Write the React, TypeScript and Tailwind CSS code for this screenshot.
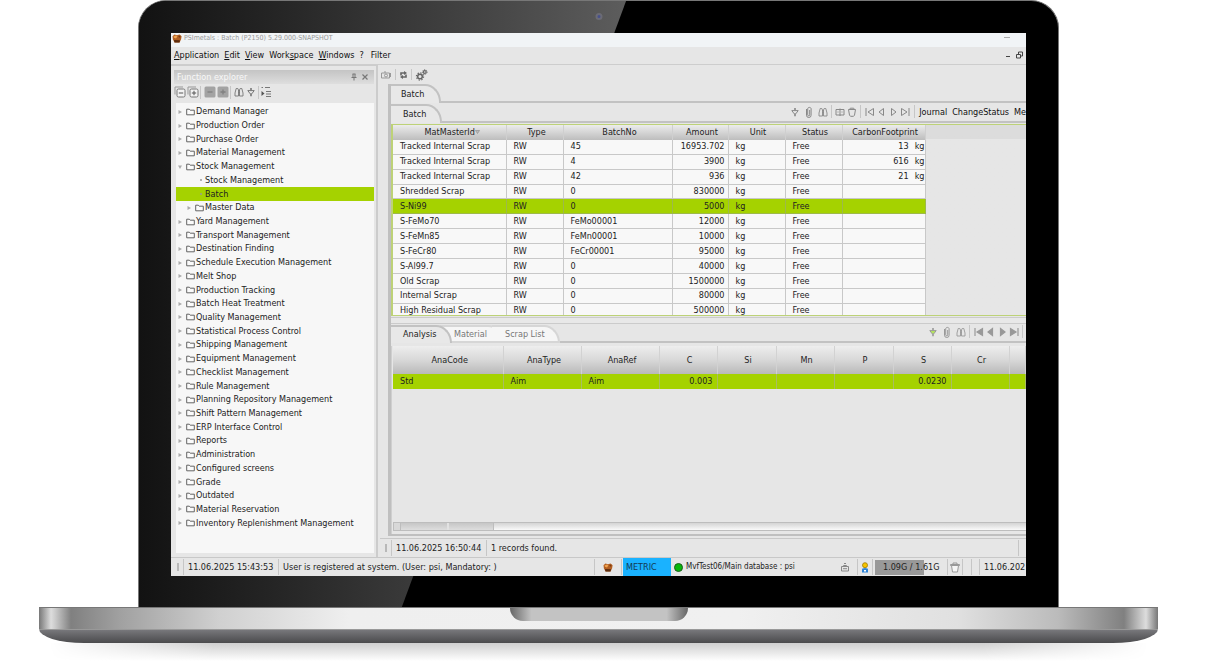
import React from "react";

type NodeState = "closed" | "open" | "leaf" | "selected" | "child";

const tree: { label: string; kind?: NodeState }[] = [
  { label: "Demand Manager" },
  { label: "Production Order" },
  { label: "Purchase Order" },
  { label: "Material Management" },
  { label: "Stock Management", kind: "open" },
  { label: "Stock Management", kind: "leaf" },
  { label: "Batch", kind: "selected" },
  { label: "Master Data", kind: "child" },
  { label: "Yard Management" },
  { label: "Transport Management" },
  { label: "Destination Finding" },
  { label: "Schedule Execution Management" },
  { label: "Melt Shop" },
  { label: "Production Tracking" },
  { label: "Batch Heat Treatment" },
  { label: "Quality Management" },
  { label: "Statistical Process Control" },
  { label: "Shipping Management" },
  { label: "Equipment Management" },
  { label: "Checklist Management" },
  { label: "Rule Management" },
  { label: "Planning Repository Management" },
  { label: "Shift Pattern Management" },
  { label: "ERP Interface Control" },
  { label: "Reports" },
  { label: "Administration" },
  { label: "Configured screens" },
  { label: "Grade" },
  { label: "Outdated" },
  { label: "Material Reservation" },
  { label: "Inventory Replenishment Management" },
];

const batches: string[][] = [
  ["Tracked Internal Scrap", "45", "16953.702", "13"],
  ["Tracked Internal Scrap", "4", "3900", "616"],
  ["Tracked Internal Scrap", "42", "936", "21"],
  ["Shredded Scrap", "0", "830000", ""],
  ["S-Ni99", "0", "5000", ""],
  ["S-FeMo70", "FeMo00001", "12000", ""],
  ["S-FeMn85", "FeMn00001", "10000", ""],
  ["S-FeCr80", "FeCr00001", "95000", ""],
  ["S-Al99.7", "0", "40000", ""],
  ["Old Scrap", "0", "1500000", ""],
  ["Internal Scrap", "0", "80000", ""],
  ["High Residual Scrap", "0", "500000", ""],
];

const batchHeads = ["MatMasterId", "Type", "BatchNo", "Amount", "Unit", "Status", "CarbonFootprint"];
const anaHeads = ["AnaCode", "AnaType", "AnaRef", "C", "Si", "Mn", "P", "S", "Cr", ""];
const anaRow = ["Std", "Aim", "Aim", "0.003", "", "", "", "0.0230", "", ""];

function Icon({ children, className = "", w = 12 }: { children: React.ReactNode; className?: string; w?: number }) {
  return (
    <svg width={w} height="12" viewBox={`0 0 ${w} 12`} fill="none" stroke="currentColor" className={`shrink-0 ${className}`} aria-hidden="true">
      {children}
    </svg>
  );
}

const Folder = () => (
  <svg width="9" height="8" viewBox="0 0 9 8" fill="#fbfbfb" stroke="#555" strokeWidth=".9" className="shrink-0" aria-hidden="true">
    <path d="M.7 6.8V1.2h2.6l.9 1h4.1v4.6z" />
  </svg>
);

const Binoculars = () => (
  <Icon w={10}>
    <path d="M1 10V7L2.2 2.5h1.6L4.5 4v6zM9 10V7L7.8 2.5H6.2L5.5 4v6zM4.5 4.5h1M4.5 6.5h1" strokeWidth=".9" />
  </Icon>
);

const Diamond = ({ lit = false }: { lit?: boolean }) => (
  <Icon w={10}>
    <path d="M1.8 4.6h6.4L5.8 7.8H4.2z" fill={lit ? "#b5e85a" : "none"} />
    <path d="M5 2v2.200M5 8v2.200" strokeWidth="1.600" />
  </Icon>
);

const Clip = () => (
  <Icon w={8}>
    <path d="M1.5 3v6.2a2.3 2.3 0 0 0 4.6 0V2.6a1.8 1.8 0 0 0-3.4 0v6.2a1 1 0 0 0 2 0V4" strokeWidth="1" />
  </Icon>
);

const Bin = () => (
  <Icon w={10}>
    <path d="M1.5 3.5h7L7.5 9.2 6.5 10.3h-3L2.5 9.2zM2.5 3.5l.8-1.3h3.4l.8 1.3" />
  </Icon>
);

const navPaths = [
  { name: "First", d: "M9.5 2.5v7L4 6zM2 2v8" },
  { name: "Previous", d: "M7.5 2.5v7L3 6z" },
  { name: "Next", d: "M3.5 2.5v7L8 6z" },
  { name: "Last", d: "M1.5 2.5v7L7 6zM9 2v8" },
];

function NavButtons({ solid = false }: { solid?: boolean }) {
  return (
    <>
      {navPaths.map((n) => (
        <button key={n.name} aria-label={n.name} className="flex w-[12px] shrink-0 justify-center">
          <Icon w={11}>
            <path d={n.d} fill={solid ? "currentColor" : "none"} strokeWidth={solid ? 1.2 : 1} />
          </Icon>
        </button>
      ))}
    </>
  );
}

const Sep = ({ className = "h-[13px]" }: { className?: string }) => <span className={`w-px shrink-0 bg-[#c6c6c6] ${className}`} />;

const Grip = () => <span className="h-[8px] w-[2px] shrink-0 bg-[#b8b8b8]" />;

const Pumpkin = () => (
  <svg width="10" height="9" viewBox="0 0 10 9" className="shrink-0" aria-hidden="true">
    <path d="M.5 2.2 2.4.6 5 1.3 7.6.4l2 1.8-.5 3L7.6 8.4H2.6L.9 5.6z" fill="#b25f22" />
    <path d="M1.500 2.400 4 1.600l1.400 1L4 4.400l-2-.6z" fill="#f2a450" />
    <path d="m2 6 6 .2L7.500 8.400h-5z" fill="#5d2c0d" />
    <path d="M6 2l2.400-.3L8 4z" fill="#7b3c12" />
  </svg>
);

function Tab({ label, active = true, className = "" }: { label: string; active?: boolean; className?: string }) {
  return (
    <button
      role="tab"
      aria-selected={active}
      className={`h-full shrink-0 rounded-tr-[16px_18px] border-t-2 border-r-2 text-left ${
        active ? "border-[#c2c2c2] bg-[#e8e8e8] pb-[2px] text-[#222]" : "border-[#d6d6d6] bg-[#f6f6f6] text-[#777]"
      } ${className}`}
    >
      {label}
    </button>
  );
}

function TreeRow({ label, kind = "closed" }: { label: string; kind?: NodeState }) {
  const leaf = kind === "leaf" || kind === "selected";
  const indent = leaf ? "pl-[21px]" : kind === "child" ? "pl-[9px]" : "pl-0";
  return (
    <li className={`flex min-h-0 ${kind === "selected" ? "bg-[#a5d200]" : ""}`}>
      <button className={`flex w-full items-center text-left ${indent}`}>
        <span className="flex w-[8px] shrink-0 justify-center">
          {leaf ? (
            <span className="size-[2px] rounded-full bg-[#999]" />
          ) : (
            <svg width="4" height="4" viewBox="0 0 4 4" fill="#aaa" aria-hidden="true">
              <path d={kind === "open" ? "M0 .5h4L2 4z" : "M.5 0v4L4 2z"} />
            </svg>
          )}
        </span>
        {!leaf && (
          <span className="mr-px ml-[2px]">
            <Folder />
          </span>
        )}
        <span className="leading-none">{label}</span>
      </button>
    </li>
  );
}

function FunctionExplorer() {
  return (
    <aside className="flex w-[207px] shrink-0 flex-col border-t border-r-2 border-[#cccccc] pt-[4px] pr-[2px] pl-[3px]">
      <header className="flex h-[14px] items-center bg-linear-to-b from-[#c4c4c4] to-[#dedede] pr-[4px] pl-[3px]">
        <h2 className="flex-1 text-[9px] text-[#f8f8f8]">Function explorer</h2>
        <button aria-label="Pin" className="text-[#777]">
          <Icon w={12}>
            <path d="M4.500 3h3M5 3v3M7 3v3M3.500 6.500h5M6 6.500v3" />
          </Icon>
        </button>
        <button aria-label="Close" className="text-[#777]">
          <Icon w={10}>
            <path d="m2.500 3.500 5 5m0-5-5 5" strokeWidth="1.200" />
          </Icon>
        </button>
      </header>
      <div className="flex h-[16px] items-center gap-px text-[#777]">
        <button aria-label="Collapse all">
          <Icon w={12}>
            <path d="M1 8.500V1h8" stroke="#999" />
            <rect x="3" y="3" width="8" height="8" rx="1.500" fill="#f2f2f2" />
            <path d="M4.800 7h4.400" stroke="#555" />
          </Icon>
        </button>
        <button aria-label="Expand all">
          <Icon w={12}>
            <path d="M1 8.500V1h8" stroke="#999" />
            <rect x="3" y="3" width="8" height="8" rx="1.500" fill="#f2f2f2" />
            <path d="M4.800 7h4.400M7 4.800v4.400" stroke="#555" />
          </Icon>
        </button>
        <Sep />
        <button aria-label="Collapse" className="ml-[2px]">
          <Icon w={12}>
            <rect x=".5" y=".5" width="11" height="11" rx="1.500" fill="#a3a3a3" stroke="none" />
            <path d="M3.500 6h5" stroke="#808080" strokeWidth="1.300" />
          </Icon>
        </button>
        <button aria-label="Expand">
          <Icon w={12}>
            <rect x=".5" y=".5" width="11" height="11" rx="1.500" fill="#a3a3a3" stroke="none" />
            <path d="M3.500 6h5M6 3.500v5" stroke="#808080" strokeWidth="1.300" />
          </Icon>
        </button>
        <Sep />
        <button aria-label="Find" className="ml-[2px]"><Binoculars /></button>
        <button aria-label="Filter" className="ml-px"><Diamond /></button>
        <Sep className="ml-px h-[13px]" />
        <button aria-label="Tree options">
          <Icon w={12}>
            <path d="M1.500 1.500H3M5 1.500h5M6 5.500h5M6 8h5M6 10.500h5" />
            <path d="M1.500 5v5L4.500 7.500z" fill="#555" stroke="none" />
          </Icon>
        </button>
      </div>
      <div className="mt-[3px] mb-[4px] ml-[2px] flex-1 bg-[#f7f7f7] pt-[2px] pb-[23px]">
        <ul className="grid h-[425px] auto-rows-fr">
          {tree.map((n, i) => (
            <TreeRow key={i} {...n} />
          ))}
        </ul>
      </div>
    </aside>
  );
}

function BatchTable() {
  return (
    <div className="h-[192px] overflow-hidden border-y border-l-2 border-[#bdd277] bg-linear-to-b from-[#dcdcdc] from-[14px] to-[#e6e6e6] to-[14px]">
      <table className="h-[194px] table-fixed border-collapse">
        <colgroup>
          <col className="w-[113px]" />
          <col className="w-[57px]" />
          <col className="w-[109px]" />
          <col className="w-[56px]" />
          <col className="w-[57px]" />
          <col className="w-[57px]" />
          <col className="w-[83px]" />
        </colgroup>
        <thead>
          <tr className="bg-linear-to-b from-[#ececec] to-[#bdbdbd]">
            {batchHeads.map((h, i) => (
              <th key={h} className="h-[15px] border-r border-[#cfcfcf] p-0 text-center font-normal leading-none">
                <span className={i === 0 ? "pl-[6px]" : i < 4 ? "pl-[4px]" : "pl-[3px]"}>{h}</span>
                {i === 0 && (
                  <svg width="5" height="4" viewBox="0 0 5 4" fill="#bbb" stroke="#888" strokeWidth=".6" className="mb-[2px] inline" aria-hidden="true">
                    <path d="M.5.5h4l-2 3z" />
                  </svg>
                )}
              </th>
            ))}
          </tr>
        </thead>
        <tbody>
          {batches.map((r, i) => {
            const sel = i === 4;
            const cell = `border-r border-b p-0 leading-none whitespace-nowrap ${sel ? "border-[#9db94a]" : "border-[#c8c8c8]"}`;
            return (
              <tr key={i} aria-selected={sel} className={sel ? "bg-[#a5d200]" : "bg-[#f8f8f8]"}>
                <td className={`${cell} pl-[7px]`}>{r[0]}</td>
                <td className={`${cell} pl-[7px]`}>RW</td>
                <td className={`${cell} pl-[7px]`}>{r[1]}</td>
                <td className={`${cell} pr-[3px] text-right`}>{r[2]}</td>
                <td className={`${cell} pl-[7px]`}>kg</td>
                <td className={`${cell} pl-[7px]`}>Free</td>
                <td className={cell}>
                  {r[3] && (
                    <span className="flex justify-end gap-[6px]">
                      <span>{r[3]}</span>
                      <span>kg</span>
                    </span>
                  )}
                </td>
              </tr>
            );
          })}
        </tbody>
      </table>
    </div>
  );
}

function AnalysisTable() {
  return (
    <table className="w-full table-fixed border-collapse">
      <colgroup>
        <col className="w-[110px]" />
        <col className="w-[78px]" />
        <col className="w-[78px]" />
        <col className="w-[58px]" />
        <col className="w-[59px]" />
        <col className="w-[58px]" />
        <col className="w-[59px]" />
        <col className="w-[58px]" />
        <col className="w-[58px]" />
        <col />
      </colgroup>
      <thead>
        <tr className="bg-linear-to-b from-[#eeeeee] via-[#d8d8d8] to-[#b9b9b9]">
          {anaHeads.map((h, i) => (
            <th key={i} className={`h-[28px] border-r border-[#d2d2d2] p-0 text-center font-normal ${i < 3 ? "pl-[4px]" : "pl-[3px]"}`}>
              {h}
            </th>
          ))}
        </tr>
      </thead>
      <tbody>
        <tr aria-selected="true" className="bg-[#a5d200]">
          {anaRow.map((v, i) => (
            <td key={i} className={`h-[15px] border-r border-[#a9bd62] p-0 leading-none ${i < 3 ? "pl-[7px]" : "pr-[4px] text-right"}`}>
              {v}
            </td>
          ))}
        </tr>
      </tbody>
    </table>
  );
}

function Workspace() {
  return (
    <main className="flex min-w-0 flex-1 flex-col">
      <div className="flex h-[19px] items-center gap-[3px] pl-[2px] text-[#666]">
        <button aria-label="Snapshot" className="text-[#999]">
          <Icon w={12}>
            <path d="M1.500 4h8v5h-8zM4 3h2M10.500 4v4" />
            <circle cx="6" cy="6.500" r="1.500" />
          </Icon>
        </button>
        <Sep className="h-[11px]" />
        <button aria-label="Refresh">
          <Icon w={9}>
            <path d="M2 6.500V4h4M7 5.500V8H3" strokeWidth="1.600" />
            <path d="M5 2v4l3-2zM4 6v4L1 8z" fill="currentColor" stroke="none" />
          </Icon>
        </button>
        <Sep className="h-[11px]" />
        <button aria-label="Settings">
          <Icon w={14}>
            <circle cx="5" cy="7.500" r="2.300" strokeWidth="1.500" />
            <circle cx="5" cy="7.500" r="3.600" strokeWidth="1.200" strokeDasharray="1.400 1.400" />
            <circle cx="9.800" cy="3" r="1.400" strokeWidth="1.200" />
            <circle cx="9.800" cy="3" r="2.300" strokeWidth=".9" strokeDasharray="1 .8" />
          </Icon>
        </button>
      </div>
      <section className="ml-[10px] flex flex-1 flex-col border-b-2 border-l-3 border-[#bfbfbf]">
        <div role="tablist" className="flex h-[19px]">
          <Tab label="Batch" className="w-[50px] pl-[10px]" />
          <div className="flex-1 border-b-2 border-[#c2c2c2]" />
        </div>
        <div className="mt-px flex h-[19px]">
          <Tab label="Batch" className="w-[51px] pl-[12px]" />
          <div className="flex min-w-0 flex-1 items-center justify-end overflow-hidden border-b-2 border-[#c2c2c2] pb-[2px] text-[#888]">
            <button aria-label="Filter" className="mr-[5px]"><Diamond /></button>
            <button aria-label="Attachment" className="mr-[5px]"><Clip /></button>
            <button aria-label="Find" className="mr-[3px]"><Binoculars /></button>
            <Sep />
            <button aria-label="Columns" className="mr-[2px] ml-[3px]">
              <Icon w={10}><path d="M1 3.500h8v5.500H1zM5 2.500v7.500M2.500 6h1M6.500 6h1" /></Icon>
            </button>
            <button aria-label="Delete" className="mr-[3px]"><Bin /></button>
            <Sep />
            <span className="ml-[2px] flex"><NavButtons /></span>
            <Sep className="mr-[4px] ml-[3px] h-[13px]" />
            <button className="text-[#111]">Journal</button>
            <button className="ml-[5px] text-[#111]">ChangeStatus</button>
            <button className="ml-[5px] text-[#111]">Me</button>
          </div>
        </div>
        <div className="mt-px"><BatchTable /></div>
        <div className="mt-px mb-px h-[7px] border-y border-[#cbcbcb] bg-[#e8e8e8]" />
        <div className="flex h-[18px]">
          <div role="tablist" className="flex">
            <Tab label="Analysis" className="z-10 w-[61px] pl-[12px]" />
            <Tab label="Material" active={false} className="-ml-[12px] w-[64px] border-b-2 pl-[14px]" />
            <Tab label="Scrap List" active={false} className="-ml-[12px] w-[68px] border-b-2 pl-[13px]" />
          </div>
          <div className="flex flex-1 items-center justify-end border-b-2 border-[#c2c2c2] pb-[3px] text-[#999]">
            <button aria-label="Filter" className="mr-[5px]"><Diamond lit /></button>
            <button aria-label="Attachment" className="mr-[5px]"><Clip /></button>
            <button aria-label="Find" className="mr-[3px]"><Binoculars /></button>
            <Sep />
            <span className="mr-[2px] ml-[2px] flex"><NavButtons solid /></span>
            <Sep className="mr-[3px] h-[13px]" />
          </div>
        </div>
        <div className="mt-[3px] flex flex-1 flex-col border-l border-[#cfcfcf] pl-px">
          <AnalysisTable />
          <div className="flex-1" />
          <div className="mb-[3px] flex h-[9px] border-y border-[#bdbdbd] bg-linear-to-b from-[#d4d4d4] to-[#fafafa]">
            <div className="flex w-[101px] border-r border-[#bdbdbd] bg-linear-to-b from-[#c6c6c6] to-[#dedede]">
              <span className="w-[8px] border-x border-[#bdbdbd] bg-[#d8d8d8]" />
              <span className="ml-[46px] w-[2px] bg-[#e2e2e2]" />
            </div>
          </div>
        </div>
      </section>
      <div className="mt-[2px] ml-[2px] flex h-[19px] items-center border-t border-[#c8c8c8] pl-[5px]">
        <Grip />
        <Sep className="ml-[4px] h-[16px]" />
        <span className="ml-[4px] w-[90px]">11.06.2025 16:50:44</span>
        <Sep className="h-[16px]" />
        <span className="ml-[4px] flex-1">1 records found.</span>
        <Sep className="mr-[7px] h-[16px]" />
      </div>
    </main>
  );
}

function StatusBar() {
  return (
    <footer className="flex h-[19px] items-center border-t border-[#c8c8c8] pl-[6px] whitespace-nowrap">
      <Grip />
      <Sep className="ml-[4px] h-[16px]" />
      <span className="ml-[4px] w-[90px]">11.06.2025 15:43:53</span>
      <Sep className="h-[16px]" />
      <span className="ml-[4px] flex-1">User is registered at system. (User: psi, Mandatory: )</span>
      <Sep className="h-[16px]" />
      <span className="mx-[8px]"><Pumpkin /></span>
      <Sep className="mr-px h-[16px]" />
      <span className="flex h-full w-[48px] items-center bg-[#1ab2ff] pl-[3px] text-[#123a55]">METRIC</span>
      <span className="ml-[3px] size-[9px] rounded-full border border-[#1c5c1c] bg-[#06b80a]" />
      <span className="ml-[3px] w-[154px] text-[8px]">MvfTest06/Main database : psi</span>
      <span className="mr-[7px] text-[#888]">
        <Icon w={10}><path d="M1.500 5.500h7V10h-7zM3.500 5.500v-1h3v1M4 2.500h2M3 7.700h4" /></Icon>
      </span>
      <Sep className="h-[16px]" />
      <svg width="8" height="11" viewBox="0 0 8 11" className="mx-[3px] shrink-0" aria-hidden="true">
        <path d="M1 10.500V7.500Q1 6 4 6t3 1.500v3z" fill="#2c83d8" />
        <path d="M3 8h2v1.500H3z" fill="#fff" />
        <circle cx="4" cy="3.200" r="2.500" fill="#f5c400" stroke="#a07a00" strokeWidth=".8" />
      </svg>
      <Sep className="mr-[2px] h-[16px]" />
      <span className="flex h-[15px] w-[67px] items-center bg-linear-to-r from-[#999] from-73% to-[#e6e6e6] to-73% pl-[8px]">1.09G / 1.61G</span>
      <Sep className="ml-[5px] h-[16px]" />
      <button aria-label="Free memory" className="mx-px text-[#999]">
        <Icon w={12}><path d="M1.500 3.500h9v1h-9zM4 3.500V2h4v1.500" /><path d="M2.500 4.500h7L8.500 11h-5z" fill="#f6f6f6" /></Icon>
      </button>
      <Sep className="h-[16px]" />
      <Sep className="ml-[8px] h-[16px]" />
      <Sep className="ml-[7px] h-[16px]" />
      <span className="ml-[4px] w-[42px] shrink-0">11.06.202</span>
    </footer>
  );
}

export default function App() {
  return (
    <div className="min-h-screen overflow-hidden bg-white font-['DejaVu_Sans_Condensed','DejaVu_Sans',sans-serif] text-[9px] leading-[12px] text-[#222]">
      <div className="relative mr-[149px] ml-[138px] rounded-t-[28px] border border-b-0 border-[#777] bg-black px-[32px] pt-[32px] pb-[31px]">
        <div className="absolute inset-0 rounded-tl-[27px] bg-linear-to-r from-[#121212] to-[#606060] to-55% [clip-path:polygon(0_0,53%_0,28.6%_100%,0_100%)]" />
        <span className="absolute top-[12px] left-1/2 size-[7px] -translate-x-1/2 rounded-full border-2 border-[#6b6b75] bg-[#46508c]" />
        <div className="relative flex flex-col overflow-hidden bg-[#e6e6e6]">
          <div className="flex h-[14px] items-start gap-[2px] bg-[#f1f4f6] pl-px text-[#999]">
            <span className="flex h-[10px] items-center"><Pumpkin /></span>
            <h1 className="flex-1 text-[7px] leading-[10px] font-normal">PSImetals : Batch (P2150) 5.29.000-SNAPSHOT</h1>
            <button aria-label="Minimize" className="mt-[4px] mr-[16px] h-px w-[6px] bg-[#aaa]" />
          </div>
          <nav className="flex h-[18px] items-center gap-[5px] border-b border-[#cdcdcd] pb-[2px] pl-[3px] text-[#111]">
            <button><u>A</u>pplication</button>
            <button><u>E</u>dit</button>
            <button><u>V</u>iew</button>
            <button>Work<u>s</u>pace</button>
            <button><u>W</u>indows</button>
            <button>?</button>
            <button className="ml-[2px]">Filter</button>
            <span className="flex-1" />
            <button aria-label="Minimize window" className="mt-[4px] h-px w-[4px] bg-[#444]" />
            <button aria-label="Restore window" className="mr-[2px] text-[#444]">
              <Icon w={9}><path d="M1.500 5.500h4V9h-4zM3.500 5.500V3h4v4h-2" /></Icon>
            </button>
          </nav>
          <div className="flex">
            <FunctionExplorer />
            <Workspace />
          </div>
          <StatusBar />
        </div>
      </div>
      <div className="relative mr-[50px] ml-[39px]">
        <div className="flex h-[22px] justify-center border-t border-[#777] bg-[linear-gradient(to_right,#777_0,#ddd_12px,#ccc_16px,#808080_32px,#a0a0a0_80px,#d0d0d0_180px,#efefef_310px,#f0f0f0_calc(100%-420px),#e0e0e0_calc(100%-200px),#bbb_calc(100%-100px),#808080_calc(100%-34px),#ddd_calc(100%-12px),#777_100%)]">
          <div className="h-[13px] w-[178px] rounded-b-[14px] bg-[linear-gradient(to_right,#666,#c3c3c3_12%,#c3c3c3_88%,#666)]" />
        </div>
        <div className="h-[14px] rounded-br-[45px_14px] rounded-bl-[45px_14px] border-t border-[#999] bg-linear-to-b from-[#77777b] to-[#4b4b4d]" />
        <div className="mx-[10px] h-[18px] bg-linear-to-b from-[#cfcfcf] to-white [mask-image:linear-gradient(to_right,transparent,black_15%,black_85%,transparent)]" />
      </div>
    </div>
  );
}
